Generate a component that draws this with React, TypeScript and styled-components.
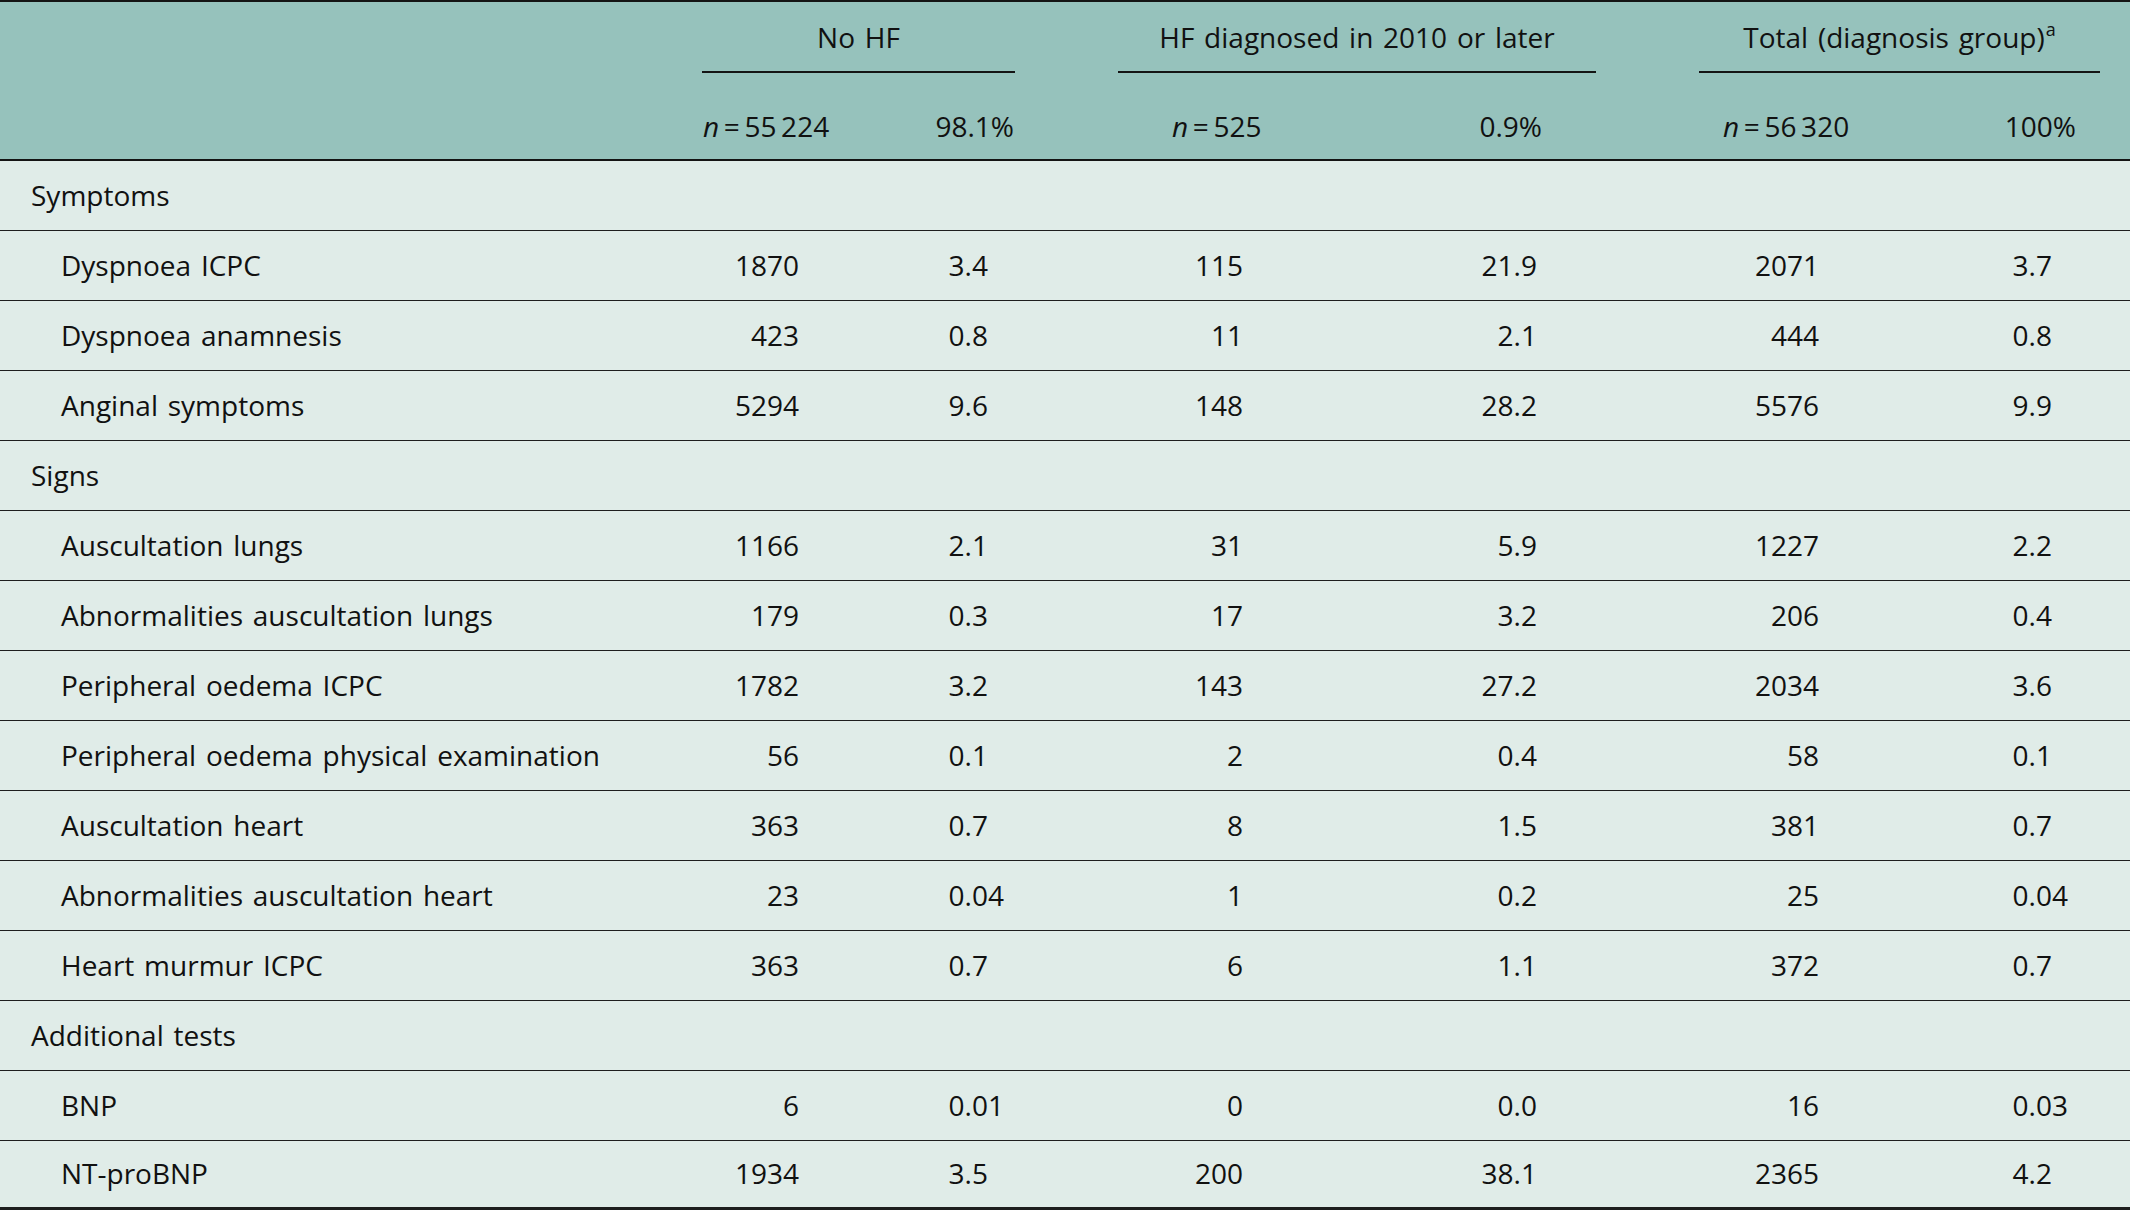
import React from "react";
import styled, { createGlobalStyle, css } from "styled-components";

const GlobalStyle = createGlobalStyle`
  html, body {
    margin: 0;
    padding: 0;
    overflow: hidden;
    background: #ffffff;
  }
  body {
    font-family: "Open Sans", "Noto Sans", "DejaVu Sans", sans-serif;
    color: #111111;
  }
`;

const tracks = css`
  display: grid;
  grid-template-columns: 702px 158px 155px 103px 239px 239px 103px 201px 200px 1fr;
`;

const Table = styled.div`
  width: 100%;
  font-size: 28px;
  line-height: 38px;
  word-spacing: 2.5px;
  border-top: 2px solid #141414;
`;

const Head = styled.div`
  background: #96c2bc;
  border-bottom: 2px solid #141414;
`;

const HeadTop = styled.div`
  ${tracks};
  padding-top: 16px;
`;

const GroupTitle = styled.div<{ $start: number }>`
  grid-column: ${(p) => p.$start} / span 2;
  text-align: center;
  padding-bottom: 15px;
  border-bottom: 2px solid #141414;
  white-space: nowrap;
`;

const Sup = styled.sup`
  font-size: 18px;
  line-height: 0;
  vertical-align: 0;
  position: relative;
  top: -12px;
  margin-left: 1px;
`;

const HeadSub = styled.div`
  ${tracks};
  padding: 34px 0 14px;
`;

const GroupCounts = styled.div<{ $start: number; $inset: number }>`
  grid-column: ${(p) => p.$start} / span 2;
  display: flex;
  justify-content: space-between;
  padding: 0 ${(p) => p.$inset}px;
  white-space: nowrap;
  word-spacing: 0;
`;

const Italic = styled.i`
  font-style: italic;
`;

const Body = styled.div`
  background: #e0ece8;
`;

const Row = styled.div<{ $last?: boolean }>`
  ${tracks};
  box-sizing: border-box;
  height: ${(p) => (p.$last ? 69 : 70)}px;
  padding-bottom: 2px;
  align-items: center;
  border-bottom: ${(p) => (p.$last ? 3 : 1)}px solid #1e1e1e;
`;

const Label = styled.div<{ $indent?: boolean }>`
  padding-left: ${(p) => (p.$indent ? 61 : 31)}px;
  white-space: nowrap;
`;

const Num = styled.div<{ $col: number; $pr: number }>`
  grid-column: ${(p) => p.$col};
  justify-self: end;
  padding-right: ${(p) => p.$pr}px;
  white-space: nowrap;
`;

const Decimal = styled.div<{ $col: number; $pr: number }>`
  grid-column: ${(p) => p.$col};
  justify-self: end;
  display: flex;
  padding-right: ${(p) => p.$pr}px;
  white-space: nowrap;
`;

const Frac = styled.span`
  width: 1.41em;
  text-align: left;
`;

type DataRow = { label: string; group?: boolean; v?: string[] };

const rows: DataRow[] = [
  { label: "Symptoms", group: true },
  { label: "Dyspnoea ICPC", v: ["1870", "3.4", "115", "21.9", "2071", "3.7"] },
  { label: "Dyspnoea anamnesis", v: ["423", "0.8", "11", "2.1", "444", "0.8"] },
  { label: "Anginal symptoms", v: ["5294", "9.6", "148", "28.2", "5576", "9.9"] },
  { label: "Signs", group: true },
  { label: "Auscultation lungs", v: ["1166", "2.1", "31", "5.9", "1227", "2.2"] },
  { label: "Abnormalities auscultation lungs", v: ["179", "0.3", "17", "3.2", "206", "0.4"] },
  { label: "Peripheral oedema ICPC", v: ["1782", "3.2", "143", "27.2", "2034", "3.6"] },
  { label: "Peripheral oedema physical examination", v: ["56", "0.1", "2", "0.4", "58", "0.1"] },
  { label: "Auscultation heart", v: ["363", "0.7", "8", "1.5", "381", "0.7"] },
  { label: "Abnormalities auscultation heart", v: ["23", "0.04", "1", "0.2", "25", "0.04"] },
  { label: "Heart murmur ICPC", v: ["363", "0.7", "6", "1.1", "372", "0.7"] },
  { label: "Additional tests", group: true },
  { label: "BNP", v: ["6", "0.01", "0", "0.0", "16", "0.03"] },
  { label: "NT-proBNP", v: ["1934", "3.5", "200", "38.1", "2365", "4.2"] },
];

// grid column and right inset of each value column
const numCols = [
  { col: 2, pr: 61 },
  { col: 5, pr: 114 },
  { col: 8, pr: 81 },
];
const pctCols = [
  { col: 3, pr: 11 },
  { col: 6, pr: 43 },
  { col: 9, pr: 32 },
];

const groups = [
  { start: 2, inset: 1, title: "No HF", n: "55\u2009224", pct: "98.1%" },
  { start: 5, inset: 54, title: "HF diagnosed in 2010 or later", n: "525", pct: "0.9%" },
  { start: 8, inset: 24, title: "Total (diagnosis group)", sup: "a", n: "56\u2009320", pct: "100%" },
];

function Pct({ value, col, pr }: { value: string; col: number; pr: number }) {
  const [int, frac] = value.split(".");
  return (
    <Decimal $col={col} $pr={pr}>
      <span>{int}</span>
      <Frac>.{frac}</Frac>
    </Decimal>
  );
}

export default function App() {
  return (
    <>
      <GlobalStyle />
      <Table>
        <Head>
          <HeadTop>
            {groups.map((g) => (
              <GroupTitle key={g.title} $start={g.start}>
                {g.title}
                {g.sup && <Sup>{g.sup}</Sup>}
              </GroupTitle>
            ))}
          </HeadTop>
          <HeadSub>
            {groups.map((g) => (
              <GroupCounts key={g.title} $start={g.start} $inset={g.inset}>
                <span>
                  <Italic>n</Italic>
                  {"\u2009=\u2009"}
                  {g.n}
                </span>
                <span>{g.pct}</span>
              </GroupCounts>
            ))}
          </HeadSub>
        </Head>
        <Body>
          {rows.map((r, i) => (
            <Row key={r.label} $last={i === rows.length - 1}>
              <Label $indent={!r.group}>{r.label}</Label>
              {r.v &&
                r.v.map((val, j) =>
                  j % 2 === 0 ? (
                    <Num key={j} $col={numCols[j / 2].col} $pr={numCols[j / 2].pr}>
                      {val}
                    </Num>
                  ) : (
                    <Pct
                      key={j}
                      value={val}
                      col={pctCols[(j - 1) / 2].col}
                      pr={pctCols[(j - 1) / 2].pr}
                    />
                  )
                )}
            </Row>
          ))}
        </Body>
      </Table>
    </>
  );
}
